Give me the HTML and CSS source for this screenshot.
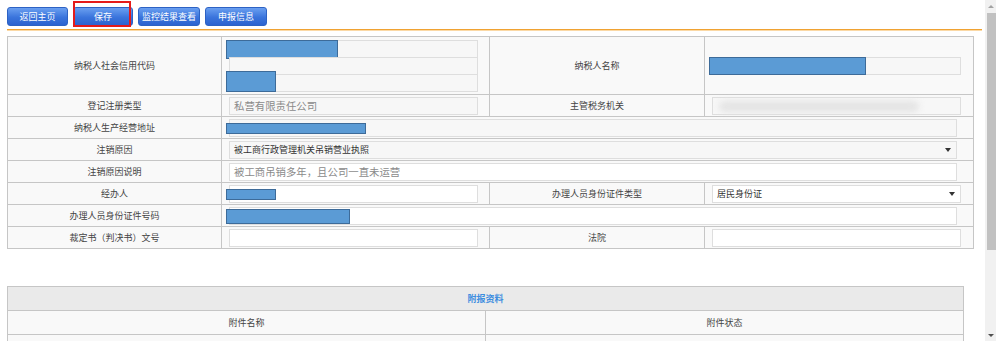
FILE: index.html
```html
<!DOCTYPE html>
<html lang="zh-CN">
<head>
    <meta charset="UTF-8">
    <title>注销登记</title>
    <link rel="stylesheet" href="styles.css">
</head>
<body>
<div class="page">
    <div class="wrap">

        <div class="toolbar">
            <a class="btn btn-home">返回主页</a>
            <a class="btn btn-save">保存</a>
            <a class="btn btn-wide">监控结果查看</a>
            <a class="btn btn-wide">申报信息</a>
            <span class="mark"></span>
        </div>

        <table class="form-table">
            <colgroup>
                <col class="c-label">
                <col class="c-value">
                <col class="c-label2">
                <col class="c-value2">
            </colgroup>
            <tr class="row-tall">
                <td class="label">纳税人社会信用代码</td>
                <td class="val">
                    <div class="stack">
                        <div class="box half"><span class="mask m-code1"></span></div>
                        <div class="box half"></div>
                        <div class="box half"><span class="mask m-code2"></span></div>
                    </div>
                </td>
                <td class="label">纳税人名称</td>
                <td class="val val-r"><div class="box half"><span class="mask m-name"></span></div></td>
            </tr>
            <tr>
                <td class="label">登记注册类型</td>
                <td class="val"><div class="box half ph">私营有限责任公司</div></td>
                <td class="label">主管税务机关</td>
                <td class="val val-r"><div class="box half"><span class="smear"></span></div></td>
            </tr>
            <tr>
                <td class="label">纳税人生产经营地址</td>
                <td class="val" colspan="3"><div class="box full"><span class="mask m-addr"></span></div></td>
            </tr>
            <tr>
                <td class="label">注销原因</td>
                <td class="val" colspan="3">
                    <div class="box full select">被工商行政管理机关吊销营业执照<span class="arrow"></span></div>
                </td>
            </tr>
            <tr>
                <td class="label">注销原因说明</td>
                <td class="val" colspan="3"><div class="box full white ph">被工商吊销多年，且公司一直未运营</div></td>
            </tr>
            <tr>
                <td class="label">经办人</td>
                <td class="val"><div class="box half white"><span class="mask m-agent"></span></div></td>
                <td class="label">办理人员身份证件类型</td>
                <td class="val val-r"><div class="box half white select">居民身份证<span class="arrow"></span></div></td>
            </tr>
            <tr>
                <td class="label">办理人员身份证件号码</td>
                <td class="val" colspan="3"><div class="box full white"><span class="mask m-id"></span></div></td>
            </tr>
            <tr>
                <td class="label">裁定书（判决书）文号</td>
                <td class="val"><div class="box half white"></div></td>
                <td class="label">法院</td>
                <td class="val val-r"><div class="box half white"></div></td>
            </tr>
        </table>

        <table class="attach-table">
            <tr>
                <th colspan="2">附报资料</th>
            </tr>
            <tr>
                <td>附件名称</td>
                <td>附件状态</td>
            </tr>
            <tr>
                <td></td>
                <td></td>
            </tr>
        </table>

    </div>

    <div class="scrollbar">
        <span class="sb-btn"><span class="tri-up"></span></span>
        <span class="sb-thumb"></span>
        <span class="sb-space"></span>
        <span class="sb-btn"><span class="tri-down"></span></span>
    </div>
</div>
</body>
</html>
```

FILE: styles.css
```css
html, body {
    margin: 0;
    padding: 0;
    background: #fff;
}
body {
    font-family: "Noto Sans CJK SC", "Liberation Sans", sans-serif;
    font-size: 9px;
    color: #444;
}
.page {
    display: flex;
    height: 341px;
    overflow: hidden;
}
.wrap {
    flex: 1;
    padding: 0 3px 0 7px;
}

/* fake browser scrollbar */
.scrollbar {
    width: 11px;
    display: flex;
    flex-direction: column;
    background: #f1f1f1;
}
.sb-btn {
    height: 12px;
    display: flex;
    align-items: center;
    justify-content: center;
}
.tri-up {
    border-left: 3px solid transparent;
    border-right: 3px solid transparent;
    border-bottom: 3px solid #a3a3a3;
}
.tri-down {
    border-left: 3px solid transparent;
    border-right: 3px solid transparent;
    border-top: 3px solid #505050;
}
.sb-thumb {
    height: 237px;
    margin: 1px 0 0 2px;
    background: #c1c1c1;
}
.sb-space {
    flex: 1;
}

/* toolbar */
.toolbar {
    position: relative;
    display: flex;
    gap: 5px;
    padding-top: 7px;
    height: 22px;
    border-bottom: 1px solid #f0a232;
    box-shadow: 0 1px 0 #fbd9a6;
}
.btn {
    box-sizing: border-box;
    height: 19px;
    line-height: 17px;
    text-align: center;
    color: #fff;
    font-size: 9px;
    border: 1px solid #2d62c4;
    border-radius: 3px;
    background: linear-gradient(#6a9ff0, #3a74dc 55%, #2c63cf);
    cursor: pointer;
}
.btn-home { width: 61px; }
.btn-save { width: 60px; }
.btn-wide { width: 62px; }
.mark {
    position: absolute;
    left: 66px;
    top: 1px;
    width: 54px;
    height: 22px;
    border: 2px solid #e41b1b;
}

/* main form table */
.form-table {
    margin-top: 6px;
    width: 966px;
    table-layout: fixed;
    border-collapse: collapse;
    background: #f9f9f9;
}
.c-label { width: 214px; }
.c-value { width: 268px; }
.c-label2 { width: 215px; }
.c-value2 { width: 269px; }
.form-table td {
    height: 21px;
    padding: 0;
    border: 1px solid #c6c6c6;
}
.form-table .row-tall td {
    height: 57px;
}
.form-table .label {
    text-align: center;
}
.form-table .val {
    padding-left: 7px;
}
.form-table .val-r {
    padding-left: 7px;
}
.box {
    position: relative;
    box-sizing: border-box;
    height: 18px;
    line-height: 16px;
    padding: 0 4px;
    border: 1px solid #dedede;
    background: #f7f7f7;
    color: #333;
}
.box.half { width: 249px; }
.box.full { width: 728px; }
.box.white { background: #fff; }
.box.ph {
    font-size: 10.4px;
    color: #8a8a8a;
}
.stack .box + .box {
    margin-top: -1px;
}
.select {
    display: flex;
    justify-content: space-between;
    align-items: center;
}
.arrow {
    width: 0;
    height: 0;
    margin-right: 1px;
    border-left: 3px solid transparent;
    border-right: 3px solid transparent;
    border-top: 4px solid #333;
}

/* redaction overlays */
.mask {
    position: absolute;
    box-sizing: border-box;
    left: -4px;
    background: #5b9bd5;
    border: 1px solid #3d6b99;
}
.m-code1 { top: -1px; width: 112px; height: 19px; }
.m-code2 { top: -4px; width: 50px; height: 21px; }
.m-name { top: -1px; width: 157px; height: 18px; }
.m-addr { top: 3px; width: 140px; height: 11px; }
.m-agent { top: 3px; width: 50px; height: 11px; }
.m-id { top: 1px; width: 124px; height: 15px; }
.smear {
    position: absolute;
    left: 6px;
    top: 3px;
    width: 200px;
    height: 11px;
    background: #e4e4e4;
    border-radius: 6px;
    filter: blur(3px);
}

/* attachments */
.attach-table {
    margin-top: 37px;
    width: 957px;
    table-layout: fixed;
    border-collapse: collapse;
    background: #f9f9f9;
}
.attach-table th,
.attach-table td {
    height: 23px;
    padding: 0;
    border: 1px solid #c6c6c6;
    text-align: center;
}
.attach-table th {
    background: #eaeaea;
    color: #3f8ee0;
    font-weight: bold;
    font-size: 9px;
}
```
